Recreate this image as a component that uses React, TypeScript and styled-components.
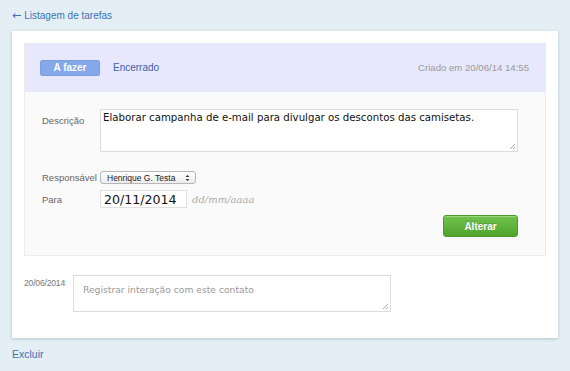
import React from "react";
import styled, { createGlobalStyle } from "styled-components";

const GlobalStyle = createGlobalStyle`
  html, body {
    margin: 0;
    padding: 0;
    background: #e4eff5;
    font-family: "Liberation Sans", Arial, sans-serif;
  }
`;

const Page = styled.div`
  width: 570px;
  height: 371px;
  padding: 0 12px;
  box-sizing: border-box;
  display: flex;
  flex-direction: column;
`;

const BackLink = styled.a`
  display: flex;
  align-items: center;
  height: 31px;
  font-size: 10px;
  color: #3d72b4;
  text-decoration: none;
`;

const Arrow = styled.span`
  font-family: "DejaVu Sans", sans-serif;
  font-size: 11px;
  margin-right: 3px;
`;

const Card = styled.div`
  background: #fff;
  padding: 12px 12px 26px;
  box-shadow: 0 1px 3px rgba(90, 110, 130, 0.35);
`;

const Panel = styled.div`
  background: #fafafa;
  border: 1px solid #ececec;
  border-top: none;
`;

const Header = styled.div`
  height: 49px;
  background: #e8e8fc;
  display: flex;
  align-items: center;
  padding: 0 16px 0 15px;
  gap: 12px;
`;

const StatusButton = styled.span<{ $active?: boolean }>`
  display: inline-flex;
  align-items: center;
  justify-content: center;
  width: ${(p) => (p.$active ? "60px" : "auto")};
  height: 16px;
  box-sizing: border-box;
  border-radius: 2px;
  font-size: 10px;
  font-weight: ${(p) => (p.$active ? "bold" : "normal")};
  color: ${(p) => (p.$active ? "#fff" : "#3d5ea8")};
  background: ${(p) => (p.$active ? "#84a8e9" : "transparent")};
  border: 1px solid ${(p) => (p.$active ? "#7a9ee0" : "transparent")};
`;

const Created = styled.span`
  margin-left: auto;
  font-size: 9.6px;
  color: #9a9a9a;
`;

const Body = styled.div`
  padding: 17px 27px 18px 17px;
  display: flex;
  flex-direction: column;
`;

const Row = styled.div<{ $mt?: number }>`
  display: flex;
  align-items: center;
  margin-top: ${(p) => p.$mt ?? 0}px;
`;

const Label = styled.span<{ $top?: boolean }>`
  width: 58px;
  flex: none;
  font-size: 9.5px;
  color: #666;
  align-self: ${(p) => (p.$top ? "flex-start" : "center")};
  margin-top: ${(p) => (p.$top ? "6px" : "0")};
`;

const TextArea = styled.div<{ $w: number; $h: number; $placeholder?: boolean }>`
  position: relative;
  width: ${(p) => p.$w}px;
  height: ${(p) => p.$h}px;
  box-sizing: border-box;
  background: #fff;
  border: 1px solid #dcdcdc;
  padding: ${(p) => (p.$placeholder ? "8px 9px" : "1px 2px")};
  font-family: "DejaVu Sans", Verdana, sans-serif;
  font-size: ${(p) => (p.$placeholder ? "9.2px" : "10.2px")};
  color: ${(p) => (p.$placeholder ? "#999" : "#111")};
  line-height: 1.4;
`;

const Grip = styled.svg`
  position: absolute;
  right: 1px;
  bottom: 1px;
`;

const Select = styled.div`
  display: inline-flex;
  align-items: center;
  justify-content: space-between;
  width: 96px;
  height: 13px;
  box-sizing: border-box;
  padding: 0 5px 0 6px;
  border: 1px solid #b7b7b7;
  border-radius: 3px;
  background: linear-gradient(#ffffff, #ececec);
  font-size: 8.5px;
  color: #222;
`;

const DateInput = styled.div`
  width: 87px;
  height: 18px;
  box-sizing: border-box;
  border: 1px solid #e0e0e0;
  background: #fff;
  padding-left: 3px;
  display: flex;
  align-items: center;
  font-family: "DejaVu Sans", Verdana, sans-serif;
  font-size: 12.6px;
  color: #111;
`;

const Hint = styled.span`
  margin-left: 5px;
  font-family: "DejaVu Serif", "Liberation Serif", serif;
  font-style: italic;
  font-size: 10px;
  color: #aaa;
`;

const Actions = styled.div`
  display: flex;
  justify-content: flex-end;
  margin-top: 6px;
`;

const SaveButton = styled.button`
  width: 75px;
  height: 22px;
  margin-top: 1px;
  border: 1px solid #4a9a2c;
  border-radius: 3px;
  background: linear-gradient(#71c24c, #4fa42f);
  box-shadow: inset 0 1px 0 rgba(255, 255, 255, 0.3);
  color: #fff;
  font-family: "Liberation Sans", Arial, sans-serif;
  font-weight: bold;
  font-size: 10px;
  text-shadow: 0 -1px 0 rgba(0, 0, 0, 0.2);
  padding: 0;
`;

const Comment = styled.div`
  display: flex;
  margin-top: 19px;
`;

const CommentDate = styled.span`
  width: 49px;
  font-size: 8.6px;
  letter-spacing: -0.2px;
  color: #777;
  margin-top: 3px;
`;

const FooterLink = styled.a`
  display: block;
  margin-top: 10px;
  font-size: 10.5px;
  color: #3d72b4;
  text-decoration: none;
`;

function ResizeGrip() {
  return (
    <Grip width="8" height="8" viewBox="0 0 8 8">
      <path d="M7 2 L2 7 M7 5 L5 7" stroke="#aaa" strokeWidth="1" />
    </Grip>
  );
}

export default function App() {
  return (
    <>
      <GlobalStyle />
      <Page>
        <BackLink href="#">
          <Arrow>←</Arrow>Listagem de tarefas
        </BackLink>
        <Card>
          <Panel>
            <Header>
              <StatusButton $active>A fazer</StatusButton>
              <StatusButton>Encerrado</StatusButton>
              <Created>Criado em 20/06/14 14:55</Created>
            </Header>
            <Body>
              <Row>
                <Label $top>Descrição</Label>
                <TextArea $w={419} $h={43}>
                  Elaborar campanha de e-mail para divulgar os descontos das camisetas.
                  <ResizeGrip />
                </TextArea>
              </Row>
              <Row $mt={19}>
                <Label>Responsável</Label>
                <Select>
                  <span>Henrique G. Testa</span>
                  <svg width="5" height="8" viewBox="0 0 5 8">
                    <path d="M0.5 3 L2.5 1 L4.5 3 Z M0.5 5 L2.5 7 L4.5 5 Z" fill="#333" />
                  </svg>
                </Select>
              </Row>
              <Row $mt={6}>
                <Label>Para</Label>
                <DateInput>20/11/2014</DateInput>
                <Hint>dd/mm/aaaa</Hint>
              </Row>
              <Actions>
                <SaveButton>Alterar</SaveButton>
              </Actions>
            </Body>
          </Panel>
          <Comment>
            <CommentDate>20/06/2014</CommentDate>
            <TextArea $w={318} $h={37} $placeholder>
              Registrar interação com este contato
              <ResizeGrip />
            </TextArea>
          </Comment>
        </Card>
        <FooterLink href="#">Excluir</FooterLink>
      </Page>
    </>
  );
}
